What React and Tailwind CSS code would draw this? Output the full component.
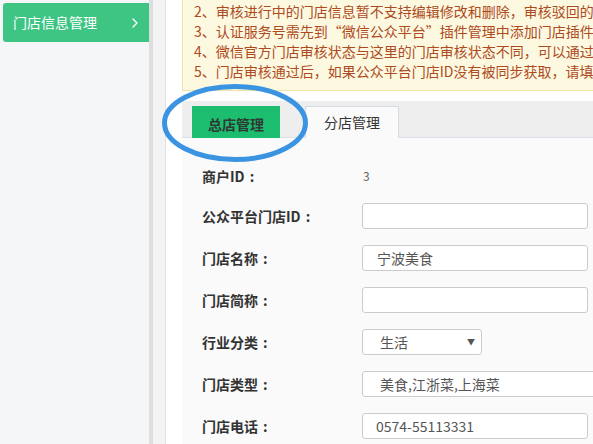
import React from 'react';
import { ChevronRight } from 'lucide-react';

const notices = [
    '2、审核进行中的门店信息暂不支持编辑修改和删除，审核驳回的门店信息可以修改后重新提交审核',
    '3、认证服务号需先到“微信公众平台”插件管理中添加门店插件，才能使用门店管理功能',
    '4、微信官方门店审核状态与这里的门店审核状态不同，可以通过同步按钮获取最新状态',
    '5、门店审核通过后，如果公众平台门店ID没有被同步获取，请填写公众平台门店ID',
];

function Row({ label, children, short }) {
    return (
        <div className={'flex items-center ' + (short ? 'h-[22px]' : 'h-[26px]')}>
            <div className="w-[160px] shrink-0 font-bold text-[14px] text-[#333]">
                {label}
                <span className="ml-[5px]">:</span>
            </div>
            {children}
        </div>
    );
}

function Field({ value, width = 'w-[226px]', pad = 'pl-[14px]' }) {
    return (
        <div className={width + ' ' + pad + ' shrink-0 h-[26px] bg-white border border-[#cccccc] rounded-[3px] flex items-center text-[14px] text-[#555]'}>
            {value}
        </div>
    );
}

export default function App() {
    return (
        <div
            className="relative flex w-[593px] h-[444px] overflow-hidden bg-white"
            style={{ fontFamily: '"Noto Sans CJK SC", "Noto Sans", sans-serif' }}
        >
            {/* sidebar */}
            <div className="w-[149px] shrink-0 bg-[#f5f6f8] pt-[3px] pl-[3px]">
                <div className="h-[39px] bg-[#3ec483] rounded-l-[3px] flex items-center justify-between pl-[10px] pr-[6px] text-white text-[14px]">
                    <span>门店信息管理</span>
                    <ChevronRight size={16} strokeWidth={2} />
                </div>
            </div>
            <div className="w-[4px] shrink-0 bg-[#dedede]"></div>
            <div className="w-[13px] shrink-0 bg-[#f3f3f3] border-r border-[#e0e0e0]"></div>

            {/* main */}
            <div className="flex-1 min-w-0 pl-[16px] flex flex-col">
                <div className="w-[480px] bg-[#fdf9e0] border border-t-0 border-r-0 border-[#f1e4a6] pl-[11px] pt-[1px] pb-[9px] whitespace-nowrap overflow-hidden text-[14px] leading-[20px] text-[#ad4a1e]">
                    {notices.map((n) => (
                        <div key={n}>{n}</div>
                    ))}
                </div>

                <div className="mt-[10px] w-[420px] h-[37px] bg-[#eeeeee] border-b border-[#dde2ea] flex items-start pl-[10px]">
                    <div className="mt-[5px] w-[88px] h-[37px] shrink-0 bg-[#1dbd6f] flex items-center justify-center text-[14px] font-bold text-[#2d3a33]">
                        总店管理
                    </div>
                    <div className="mt-[5px] ml-[25px] w-[94px] h-[32px] shrink-0 bg-[#fafafa] border border-b-0 border-[#d5dbe5] flex items-center justify-center text-[14px] text-[#333]">
                        分店管理
                    </div>
                </div>

                <div className="flex-1 w-[420px] bg-[#fafafa] pl-[20px] pt-[27px] flex flex-col gap-[16px]">
                    <Row label="商户ID" short>
                        <span className="pl-[1px] text-[12px] text-[#666]">3</span>
                    </Row>
                    <Row label="公众平台门店ID">
                        <Field value="" />
                    </Row>
                    <Row label="门店名称">
                        <Field value="宁波美食" />
                    </Row>
                    <Row label="门店简称">
                        <Field value="" />
                    </Row>
                    <Row label="行业分类">
                        <div className="w-[120px] shrink-0 h-[26px] bg-white border border-[#cccccc] rounded-[3px] flex items-center justify-between pl-[17px] pr-[6px] text-[14px] text-[#555]">
                            <span>生活</span>
                            <span className="text-[8px] text-[#555]">▼</span>
                        </div>
                    </Row>
                    <Row label="门店类型">
                        <Field value="美食,江浙菜,上海菜" width="w-[245px]" pad="pl-[17px]" />
                    </Row>
                    <Row label="门店电话">
                        <Field value="0574-55113331" pad="pl-[13px]" />
                    </Row>
                </div>
            </div>

            {/* annotation ring */}
            <svg className="absolute left-[162px] top-[84px]" width="146" height="78" viewBox="0 0 146 78">
                <ellipse cx="73" cy="39" rx="70.5" ry="36.5" fill="none" stroke="#3b94e2" strokeWidth="5" />
            </svg>
        </div>
    );
}
